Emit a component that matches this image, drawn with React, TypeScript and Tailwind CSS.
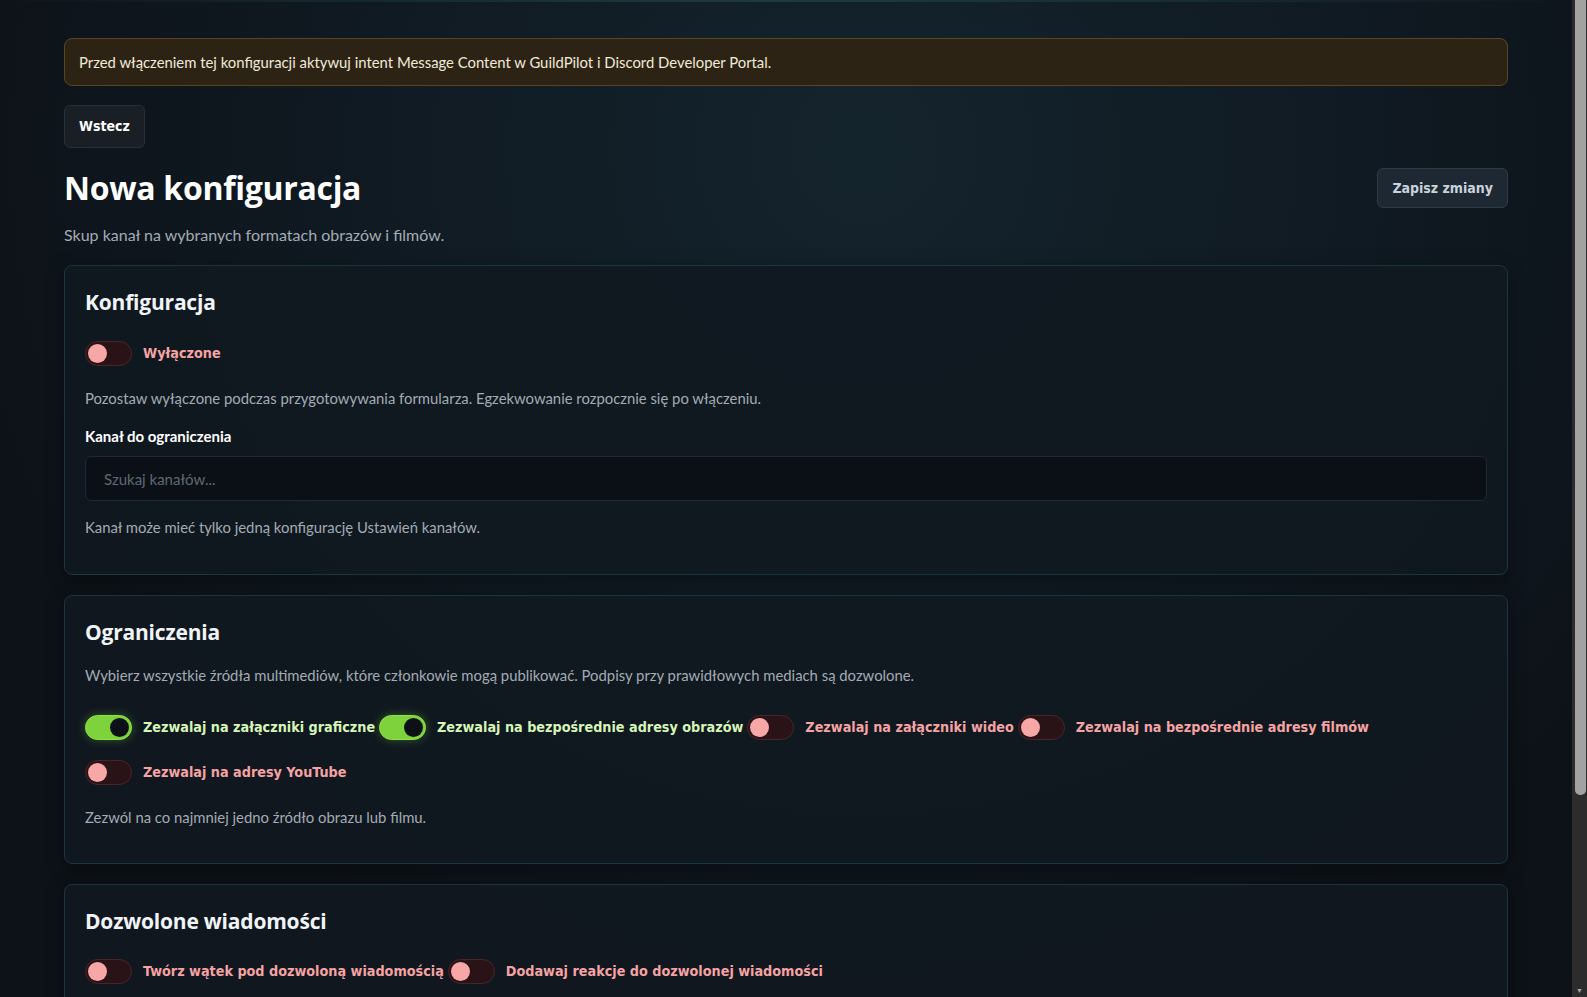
import { useState } from 'react';

type ToggleProps = {
  on: boolean;
  label: string;
  onChange: () => void;
};

function Toggle({ on, label, onChange }: ToggleProps) {
  return (
    <button type="button" onClick={onChange} className="flex items-center gap-[11px] h-[25px]">
      <span
        className={`relative inline-flex items-center w-[47px] h-[25px] rounded-full border transition-colors ${
          on
            ? 'bg-[#7ed33c] border-[#8fe04a] shadow-[0_0_10px_rgba(126,211,60,0.35)] justify-end'
            : 'bg-[#2a1317] border-[#4b2428] justify-start'
        }`}
      >
        <span
          className={`block w-[19px] h-[19px] rounded-full mx-[2px] ${on ? 'bg-[#0d1117]' : 'bg-[#f8a7a7]'}`}
        />
      </span>
      <span
        className={`font-['DejaVu_Sans_Condensed',sans-serif] font-bold text-[14.25px] whitespace-nowrap ${
          on ? 'text-[#d6f5b8]' : 'text-[#f5a3a3]'
        }`}
      >
        {label}
      </span>
    </button>
  );
}

function Card({ title, children, className = '' }: { title: string; children: React.ReactNode; className?: string }) {
  return (
    <section
      className={`rounded-lg border border-[#1b3441] bg-[#111820]/90 px-5 pt-5 shadow-[0_4px_18px_rgba(0,0,0,0.35)] ${className}`}
    >
      <h2 className="font-['Open_Sans',sans-serif] text-[21px] leading-8 font-bold tracking-[-0.2px] text-[#f1f4f7]">{title}</h2>
      {children}
    </section>
  );
}

export default function App() {
  const [enabled, setEnabled] = useState(false);
  const [media, setMedia] = useState({
    images: true,
    imageUrls: true,
    videos: false,
    videoUrls: false,
    youtube: false,
  });
  const [thread, setThread] = useState(false);
  const [reactions, setReactions] = useState(false);

  const flip = (k: keyof typeof media) => setMedia((m) => ({ ...m, [k]: !m[k] }));

  return (
    <div className="flex h-screen bg-[#0d1218]">
      <div className="flex-1 overflow-y-auto [scrollbar-width:none] bg-[radial-gradient(ellipse_at_55%_15%,#14242d_0%,#101a22_40%,#0d1218_75%)] font-['Lato',sans-serif] text-[#e6eaee]">
        <div className="h-[2px] bg-gradient-to-r from-transparent via-[#1d3a40] to-transparent" />
        <div className="px-16 pt-[36px] pb-10 flex flex-col">
          <div className="h-12 flex items-center px-[14px] rounded-lg border border-[#5a4520] bg-[#2d2314] text-[14.85px] text-[#f1ead8]">
            Przed włączeniem tej konfiguracji aktywuj intent Message Content w GuildPilot i Discord Developer Portal.
          </div>

          <button
            type="button"
            className="self-start mt-[19px] h-[43px] px-[14px] rounded-md border border-[#2a3038] bg-[#1a1f26] font-['DejaVu_Sans_Condensed',sans-serif] font-bold text-[14px] text-white"
          >
            Wstecz
          </button>

          <div className="mt-5 flex items-center justify-between">
            <h1 className="font-['Open_Sans',sans-serif] text-[32px] leading-10 font-bold tracking-[-0.3px] text-white">Nowa konfiguracja</h1>
            <button
              type="button"
              className="h-10 px-[14px] rounded-md border border-[#2e3a45] bg-[#1e2832] font-['DejaVu_Sans_Condensed',sans-serif] font-bold text-[14px] text-[#c9d3dc]"
            >
              Zapisz zmiany
            </button>
          </div>
          <p className="mt-[17px] text-[16px] leading-5 text-[#a3abb4]">Skup kanał na wybranych formatach obrazów i filmów.</p>

          <Card title="Konfiguracja" className="mt-5 pb-[37px]">
            <div className="mt-[23px]">
              <Toggle on={enabled} label={enabled ? 'Włączone' : 'Wyłączone'} onChange={() => setEnabled(!enabled)} />
            </div>
            <p className="mt-[22px] text-[14.85px] leading-5 text-[#a3abb4]">
              Pozostaw wyłączone podczas przygotowywania formularza. Egzekwowanie rozpocznie się po włączeniu.
            </p>
            <label className="block mt-[18px] text-[15px] leading-5 font-bold text-white">Kanał do ograniczenia</label>
            <input
              placeholder="Szukaj kanałów..."
              className="mt-[10px] w-full h-[45px] px-[18px] rounded-md border border-[#1e2a33] bg-[#0b1016] text-[15px] text-white placeholder:text-[#5f6872] outline-none"
            />
            <p className="mt-4 text-[14.85px] leading-5 text-[#a3abb4]">Kanał może mieć tylko jedną konfigurację Ustawień kanałów.</p>
          </Card>

          <Card title="Ograniczenia" className="mt-5 pb-9">
            <p className="mt-[17px] text-[14.85px] leading-5 text-[#a3abb4]">
              Wybierz wszystkie źródła multimediów, które członkowie mogą publikować. Podpisy przy prawidłowych mediach są dozwolone.
            </p>
            <div className="mt-[30px] flex flex-wrap gap-x-1 gap-y-5">
              <Toggle on={media.images} label="Zezwalaj na załączniki graficzne" onChange={() => flip('images')} />
              <Toggle on={media.imageUrls} label="Zezwalaj na bezpośrednie adresy obrazów" onChange={() => flip('imageUrls')} />
              <Toggle on={media.videos} label="Zezwalaj na załączniki wideo" onChange={() => flip('videos')} />
              <Toggle on={media.videoUrls} label="Zezwalaj na bezpośrednie adresy filmów" onChange={() => flip('videoUrls')} />
              <Toggle on={media.youtube} label="Zezwalaj na adresy YouTube" onChange={() => flip('youtube')} />
            </div>
            <p className="mt-[22px] text-[14.85px] leading-5 text-[#a3abb4]">Zezwól na co najmniej jedno źródło obrazu lub filmu.</p>
          </Card>

          <Card title="Dozwolone wiadomości" className="mt-5 pb-9">
            <div className="mt-[22px] flex flex-wrap gap-x-1 gap-y-5">
              <Toggle on={thread} label="Twórz wątek pod dozwoloną wiadomością" onChange={() => setThread(!thread)} />
              <Toggle on={reactions} label="Dodawaj reakcje do dozwolonej wiadomości" onChange={() => setReactions(!reactions)} />
            </div>
            <p className="mt-[22px] text-[14.85px] leading-5 text-[#a3abb4]">
              Wątki i reakcje są dodawane tylko do wiadomości spełniających wymagania.
            </p>
          </Card>

          <Card title="Wiadomość o usunięciu" className="mt-5 pb-9">
            <p className="mt-[17px] text-[14.85px] leading-5 text-[#a3abb4]">
              Wiadomość wysyłana do członka po usunięciu niedozwolonej treści.
            </p>
          </Card>
        </div>
      </div>

      {/* window scrollbar as seen in the capture */}
      <div className="w-[15px] shrink-0 flex flex-col bg-[#2c2c2c]">
        <div className="h-[795px] ml-[3px] mr-[1px] rounded-b-[5px] bg-[#a2a2a2]" />
        <div className="flex-1" />
        <div className="h-[14px] flex items-center justify-center text-[7px] leading-none text-[#a8a8a8]">▼</div>
      </div>
    </div>
  );
}
